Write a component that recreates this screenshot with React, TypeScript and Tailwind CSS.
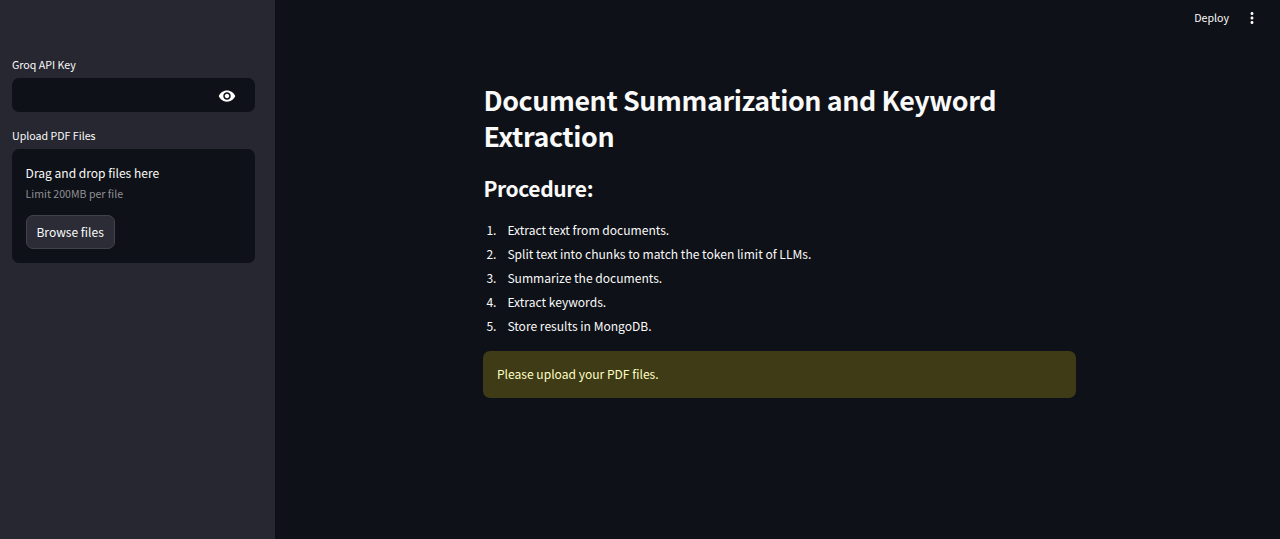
import { MdVisibility, MdMoreVert } from "react-icons/md";

const steps = [
  "Extract text from documents.",
  "Split text into chunks to match the token limit of LLMs.",
  "Summarize the documents.",
  "Extract keywords.",
  "Store results in MongoDB.",
];

function Sidebar() {
  return (
    <aside className="w-[275px] shrink-0 bg-[#262730] pl-3 pr-[20.5px] pt-[55px]">
      <label className="block h-[23px] text-[10.65px] leading-[20px]">Groq API Key</label>
      <div className="flex h-[34px] items-center justify-end rounded-[7px] bg-[#0e1117] pr-[18.4px] pt-px">
        <MdVisibility className="size-[18px] text-white" />
      </div>
      <div className="mt-[14px] h-[23px] text-[10.65px] leading-[20px]">Upload PDF Files</div>
      <section className="h-[114px] rounded-[7px] bg-[#0e1117] px-[13.6px] pt-[14px]">
        <p className="text-[12.05px] leading-[20px]">Drag and drop files here</p>
        <p className="mt-px text-[10.6px] leading-[20px] text-[#8f9093]">Limit 200MB per file</p>
        <button className="mt-[11px] h-[34px] w-[89px] rounded-[7px] border border-[#41424a] bg-[#2b2c36] pb-px text-[12.05px] leading-[31px]">
          Browse files
        </button>
      </section>
    </aside>
  );
}

export default function App() {
  return (
    <div className="flex h-[539px] w-full overflow-hidden bg-[#0e1117] font-['Noto_Sans_CJK_SC',sans-serif] text-[#fafafa]">
      <Sidebar />
      <div className="min-w-0 flex-1">
        <header className="flex h-9 items-center justify-end pr-[19px]">
          <span className="text-[10.65px] leading-[20px]">Deploy</span>
          <MdMoreVert className="ml-[14px] size-[18px]" />
        </header>
        <main className="ml-[208.4px] w-[592.3px] pt-[46px]">
          <h1 className="text-[26.8px] font-bold leading-[36px] tracking-[-0.38px]">
            Document Summarization and Keyword Extraction
          </h1>
          <h2 className="mt-[20px] text-[21px] font-bold leading-[28px] tracking-[-0.38px]">Procedure:</h2>
          <ol className="mt-[15.6px]">
            {steps.map((step, i) => (
              <li key={step} className="flex h-[24.2px] text-[12.07px] leading-[24px]">
                <span className="w-[24px] pl-[3px]">{i + 1}.</span>
                <span className="whitespace-nowrap">{step}</span>
              </li>
            ))}
          </ol>
          <div className="mt-[12.4px] h-[47px] rounded-[7px] bg-[#3e3b16] pl-[13.6px] text-[12.07px] leading-[46px] text-[#ffffc2]">
            Please upload your PDF files.
          </div>
        </main>
      </div>
    </div>
  );
}
